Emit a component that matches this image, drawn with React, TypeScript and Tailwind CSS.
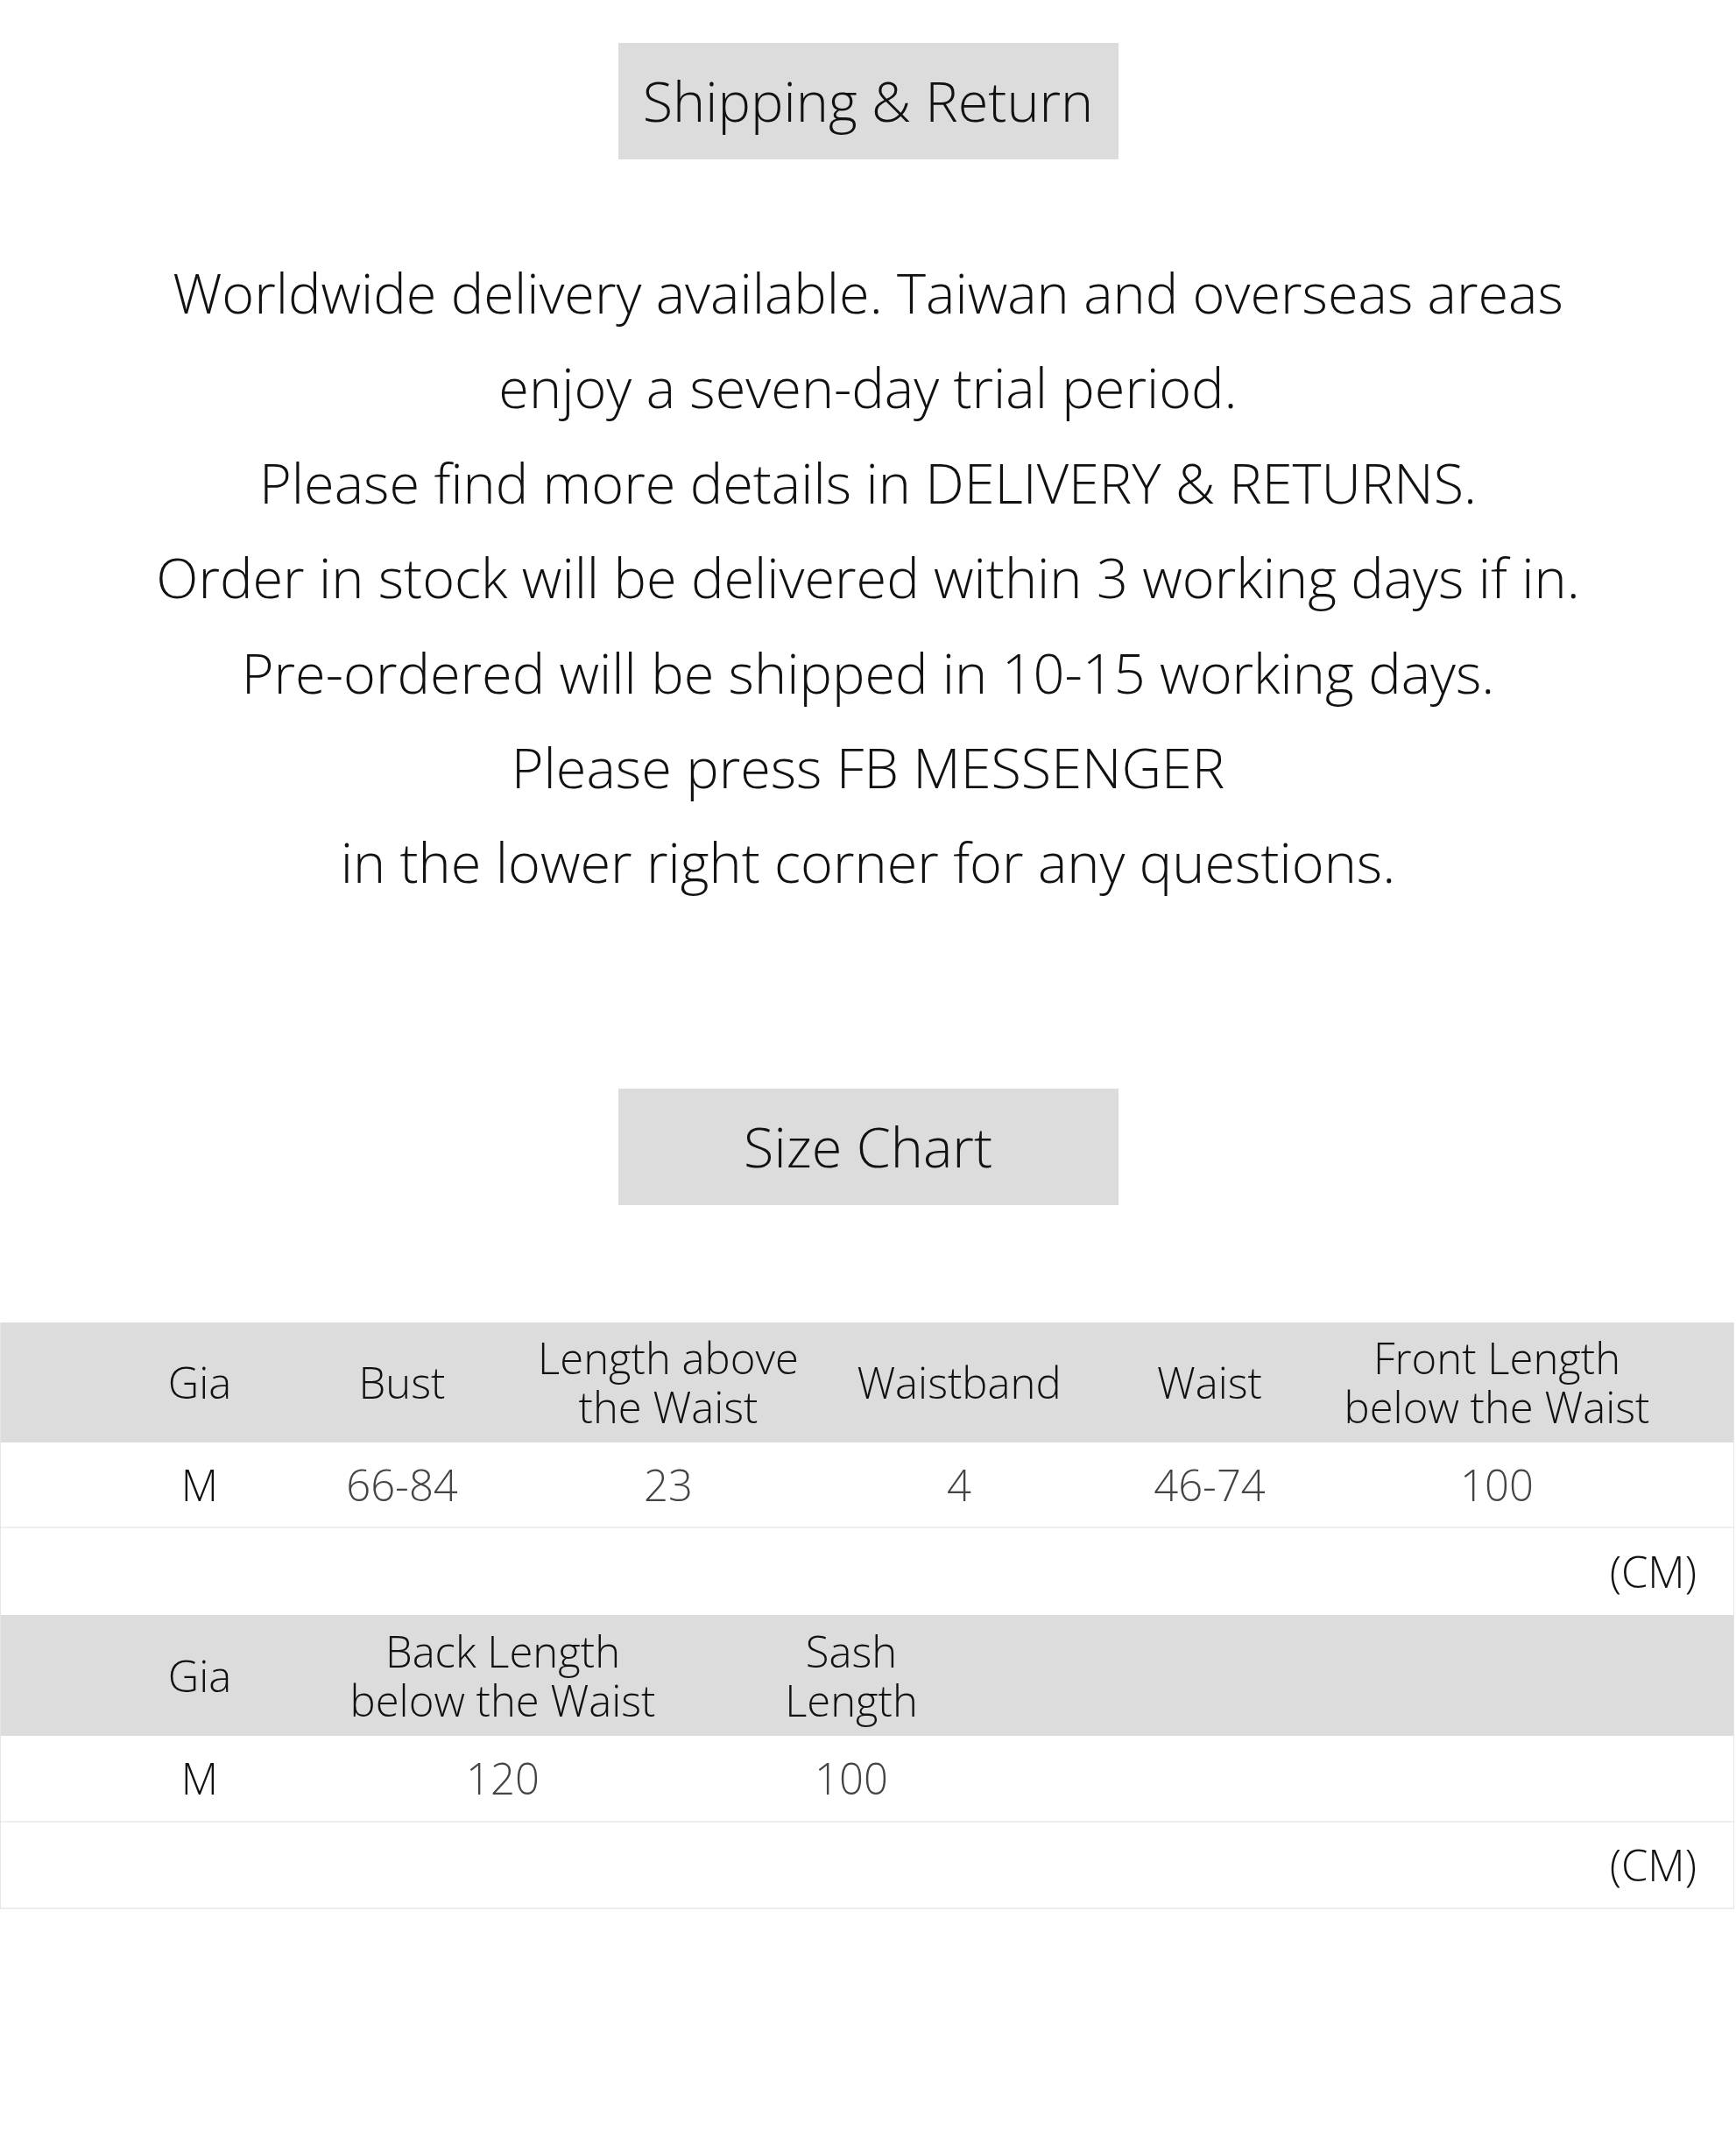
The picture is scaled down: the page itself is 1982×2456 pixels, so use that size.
import React from 'react'

const lines = [
  'Worldwide delivery available. Taiwan and overseas areas',
  'enjoy a seven-day trial period.',
  'Please find more details in DELIVERY & RETURNS.',
  'Order in stock will be delivered within 3 working days if in.',
  'Pre-ordered will be shipped in 10-15 working days.',
  'Please press FB MESSENGER',
  'in the lower right corner for any questions.',
]

function SectionTitle({ children }: { children: React.ReactNode }) {
  return (
    <div className="flex justify-center">
      <div className="flex h-[133px] w-[571px] items-center justify-center bg-[#dcdcdc] text-[63px] text-[#111]">
        {children}
      </div>
    </div>
  )
}

const firstCols = 'grid grid-cols-[226px_236px_372px_292px_280px_376px]'
const secondCols = 'grid grid-cols-[226px_466px_330px]'

export default function App() {
  return (
    <div className="min-h-[2456px] bg-white pt-[49px] font-['Open_Sans',sans-serif] font-light">
      <SectionTitle>Shipping &amp; Return</SectionTitle>

      <div className="mt-[98px] text-center text-[63px] leading-[108.4px] text-[#111]">
        {lines.map(line => (
          <p key={line}>{line}</p>
        ))}
      </div>

      <div className="mt-[204px]">
        <SectionTitle>Size Chart</SectionTitle>
      </div>

      <div className="mt-[134px] w-[1980px] border-x border-[#e6e6e6] text-[49px] leading-[56px]">
        <div className={`${firstCols} h-[137px] items-center bg-[#dcdcdc] pl-[114px] text-center text-[#111]`}>
          <span>Gia</span>
          <span>Bust</span>
          <span>
            Length above
            <br />
            the Waist
          </span>
          <span>Waistband</span>
          <span>Waist</span>
          <span>
            Front Length
            <br />
            below the Waist
          </span>
        </div>
        <div className={`${firstCols} h-[98px] items-center border-b-2 border-[#eeeeee] pl-[114px] text-center text-[#444]`}>
          <span className="text-[#111]">M</span>
          <span>66-84</span>
          <span>23</span>
          <span>4</span>
          <span>46-74</span>
          <span>100</span>
        </div>
        <div className="flex h-[99px] items-center justify-end pr-[42px] text-[#111]">(CM)</div>

        <div className={`${secondCols} h-[138px] items-center bg-[#dcdcdc] pl-[114px] text-center text-[#111]`}>
          <span>Gia</span>
          <span>
            Back Length
            <br />
            below the Waist
          </span>
          <span>
            Sash
            <br />
            Length
          </span>
        </div>
        <div className={`${secondCols} h-[99px] items-center border-b-2 border-[#eeeeee] pl-[114px] text-center text-[#444]`}>
          <span className="text-[#111]">M</span>
          <span>120</span>
          <span>100</span>
        </div>
        <div className="flex h-[99px] items-center justify-end border-b-2 border-[#eeeeee] pr-[42px] text-[#111]">
          (CM)
        </div>
      </div>
    </div>
  )
}
